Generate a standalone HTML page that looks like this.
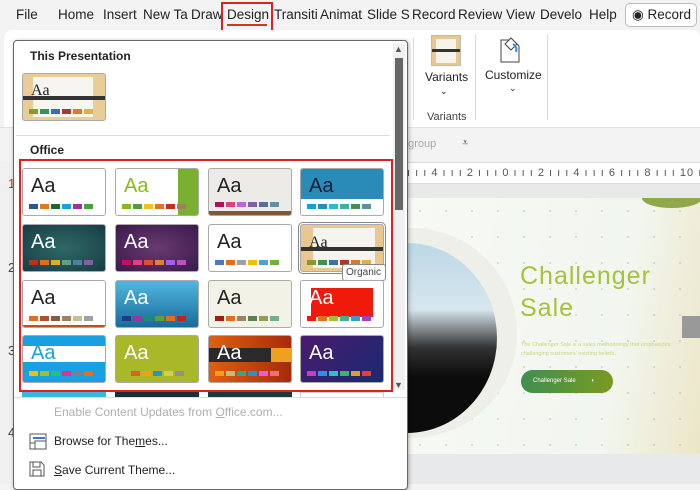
<!DOCTYPE html>
<html><head><meta charset="utf-8"><style>
*{margin:0;padding:0;box-sizing:border-box}
body{width:700px;height:484px;overflow:hidden;background:#f3f3f3;font-family:"Liberation Sans",sans-serif;position:relative;color:#222}
.a{position:absolute}
.tab{position:absolute;top:7px;font-size:13.5px;color:#222}
.th{position:absolute;width:84px;height:48px;border:1px solid #aaa;border-radius:3px;overflow:hidden;background:#fff}
.th .t{position:absolute;left:8px;top:6px;font-size:20px}
.sw{position:absolute;left:6px;bottom:6px;display:flex;gap:2px}
.sw i{display:block;width:9px;height:5px}
</style></head><body>
<div class="tab" style="left:16px">File</div>
<div class="tab" style="left:58px">Home</div>
<div class="tab" style="left:103px">Insert</div>
<div class="tab" style="left:143px">New Ta</div>
<div class="tab" style="left:191px">Draw</div>
<div class="tab" style="left:227px">Design</div>
<div class="a" style="left:227px;top:24px;width:40px;height:2px;background:#c43e1c"></div>
<div class="a" style="left:221px;top:2px;width:52px;height:32px;border:2px solid #e02020"></div>
<div class="tab" style="left:274px">Transiti</div>
<div class="tab" style="left:320px">Animat</div>
<div class="tab" style="left:367px">Slide S</div>
<div class="tab" style="left:412px">Record</div>
<div class="tab" style="left:458px">Review</div>
<div class="tab" style="left:506px">View</div>
<div class="tab" style="left:540px">Develo</div>
<div class="tab" style="left:589px">Help</div>
<div class="a" style="left:625px;top:3px;width:72px;height:24px;border:1px solid #bbb;border-radius:5px;background:#fff;font-size:13.5px;padding:3px 0 0 6px">◉ Record</div>
<div class="a" style="left:4px;top:30px;width:696px;height:97px;background:#fff;border-radius:8px 8px 0 0"></div>
<div class="a" style="left:413px;top:38px;width:1px;height:82px;background:#ddd"></div>
<div class="a" style="left:475px;top:34px;width:1px;height:86px;background:#ddd"></div>
<div class="a" style="left:547px;top:34px;width:1px;height:86px;background:#ddd"></div>
<div class="a" style="left:431px;top:35px;width:30px;height:31px;background:#e8c890;border:1px solid #bbb"><div style="position:absolute;left:4px;top:3px;width:20px;height:24px;background:#f6f3ea"></div><div style="position:absolute;left:0;top:13px;width:28px;height:3px;background:#333"></div></div>
<div class="a" style="left:425px;top:70px;font-size:12px">Variants</div>
<div class="a" style="left:440px;top:86px;font-size:9px">⌄</div>
<div class="a" style="left:427px;top:111px;font-size:11px;color:#444">Variants</div>
<svg class="a" style="left:497px;top:34px" width="26" height="30"><path d="M4 6h12l6 6v16H4z" fill="#fff" stroke="#444"/><path d="M8 10l6-6 6 6-6 6z" fill="#fff" stroke="#444"/><path d="M16 10c3 2 4 5 3 8" stroke="#3a8fd8" stroke-width="2" fill="none"/></svg>
<div class="a" style="left:485px;top:68px;font-size:12px">Customize</div>
<div class="a" style="left:509px;top:83px;font-size:9px">⌄</div>
<div class="a" style="left:0;top:127px;width:700px;height:35px;background:#f3f3f3;border-top:1px solid #e2e2e2"></div>
<div class="a" style="left:402px;top:138px;font-size:11px;color:#aaa">ngroup</div>
<div class="a" style="left:462px;top:137px;font-size:11px;color:#555">⩡</div>
<div class="a" style="left:0;top:162px;width:16px;height:322px;background:#f0f0f0;border-right:1px solid #ccc"></div>
<div class="a" style="left:8px;top:176px;font-size:13px;color:#d03010">1</div>
<div class="a" style="left:8px;top:260px;font-size:13px;color:#444">2</div>
<div class="a" style="left:8px;top:343px;font-size:13px;color:#444">3</div>
<div class="a" style="left:8px;top:425px;font-size:13px;color:#444">4</div>
<div class="a" style="left:407px;top:162px;width:293px;height:22px;background:#fff;border-top:1px solid #ddd;border-bottom:1px solid #ddd;font-size:11px;color:#555;padding-top:4px;white-space:nowrap;letter-spacing:1px;overflow:hidden">ı ı ı 4 ı ı ı 2 ı ı ı 0 ı ı ı 2 ı ı ı 4 ı ı ı 6 ı ı ı 8 ı ı ı 10 ı ı ı 12 ı ı ı 14 ı ı ı 16</div>
<div class="a" style="left:407px;top:184px;width:293px;height:300px;background:#e8e9eb"></div>
<div class="a" style="left:407px;top:198px;width:293px;height:256px;overflow:hidden;background-image:radial-gradient(#888 0.6px,transparent 0.7px),linear-gradient(100deg,#f7f9f5,#f2f6ef 70%,#ece6c8);background-size:26px 26px,100% 100%">
<div class="a" style="left:-100px;top:30px;width:210px;height:210px;border-radius:50%;background:#edefe8"></div>
<div class="a" style="left:-90px;top:45px;width:180px;height:190px;border-radius:50%;background:linear-gradient(180deg,#bcd8e6 0,#d7e6ee 35%,#333 55%,#0c0c0c 70%)"></div>
<div class="a" style="left:113px;top:64px;font-size:25px;color:#a8c13a;letter-spacing:1px">Challenger</div>
<div class="a" style="left:113px;top:96px;font-size:25px;color:#a8c13a;letter-spacing:1px">Sale</div>
<div class="a" style="left:114px;top:143px;font-size:5.5px;color:#c5d87a;line-height:9px">The Challenger Sale is a sales methodology that emphasizes<br>challenging customers' existing beliefs.</div>
<div class="a" style="left:114px;top:172px;width:92px;height:23px;border-radius:12px;background:linear-gradient(90deg,#3f8f50,#7a9a20);color:#fff;font-size:6px;padding:8px 0 0 12px">Challenger Sale &nbsp;&nbsp;&nbsp;&nbsp;&nbsp;&nbsp;&nbsp;&nbsp;◖</div>
<div class="a" style="left:275px;top:118px;width:18px;height:22px;background:#999"></div>
<div class="a" style="left:235px;top:-10px;width:60px;height:20px;border-radius:50%;background:#8fa84a"></div>
</div>
<div class="a" style="left:13px;top:40px;width:395px;height:450px;background:#fff;border:1px solid #666;border-radius:4px;box-shadow:1px 1px 4px rgba(0,0,0,.3)"></div>
<div class="a" style="left:393px;top:44px;width:12px;height:346px;background:#f0f0f0"></div>
<div class="a" style="left:394px;top:44px;font-size:9px;color:#555">▲</div>
<div class="a" style="left:395px;top:58px;width:8px;height:152px;background:#666"></div>
<div class="a" style="left:394px;top:380px;font-size:9px;color:#555">▼</div>
<div class="a" style="left:30px;top:49px;font-size:12px;font-weight:bold">This Presentation</div>
<div class="th" style="left:22px;top:73px;background:#e9cc96"><div style="position:absolute;left:10px;top:3px;width:60px;height:40px;background:#f6f5ef"></div><div style="position:absolute;left:0;top:22px;width:84px;height:4px;background:#333"></div><div class="t" style="font-family:'Liberation Serif';top:8px;font-size:16px">Aa</div><div class="sw"><i style="background:#8a9a2a"></i><i style="background:#3f8f5a"></i><i style="background:#3f6fa8"></i><i style="background:#a83a2a"></i><i style="background:#e07a20"></i><i style="background:#e0b040"></i></div></div>
<div class="a" style="left:16px;top:135px;width:374px;height:1px;background:#ddd"></div>
<div class="a" style="left:30px;top:143px;font-size:12px;font-weight:bold">Office</div>
<div class="a" style="left:19px;top:159px;width:374px;height:233px;border:2px solid #e02020"></div>
<div class="th" style="left:22px;top:168px"><div class="t">Aa</div><div class="sw"><i style="background:#2a5a8a"></i><i style="background:#e07a20"></i><i style="background:#1a6a2a"></i><i style="background:#1aa0e0"></i><i style="background:#a030a0"></i><i style="background:#4aa040"></i></div></div>
<div class="th" style="left:115px;top:168px"><div style="position:absolute;right:0;top:0;width:20px;height:48px;background:#7ab030"></div><div class="t" style="color:#8ab820">Aa</div><div class="sw"><i style="background:#8ab820"></i><i style="background:#4aa040"></i><i style="background:#f0c020"></i><i style="background:#f07020"></i><i style="background:#c03020"></i><i style="background:#a08060"></i></div></div>
<div class="th" style="left:208px;top:168px;background:#ecebe8"><div class="t">Aa</div><div style="position:absolute;left:0;bottom:0;width:84px;height:4px;background:#7a5a3a"></div><div class="sw" style="bottom:8px"><i style="background:#b01060"></i><i style="background:#e04080"></i><i style="background:#c060e0"></i><i style="background:#8060a0"></i><i style="background:#5070a0"></i><i style="background:#6090a0"></i></div></div>
<div class="th" style="left:300px;top:168px"><div style="position:absolute;left:0;top:0;width:84px;height:30px;background:#2a8ab8"></div><div class="t" style="color:#123">Aa</div><div class="sw"><i style="background:#10a0e0"></i><i style="background:#2090c0"></i><i style="background:#20c0d0"></i><i style="background:#40b0a0"></i><i style="background:#409050"></i><i style="background:#6090a0"></i></div></div>
<div class="th" style="left:22px;top:224px;background:radial-gradient(#2f6a66,#173c45)"><div class="t" style="color:#fff">Aa</div><div class="sw"><i style="background:#c03010"></i><i style="background:#e07010"></i><i style="background:#e0b020"></i><i style="background:#60a080"></i><i style="background:#5080a0"></i><i style="background:#8060a0"></i></div></div>
<div class="th" style="left:115px;top:224px;background:radial-gradient(#6a3a70,#3a1a4a)"><div class="t" style="color:#fff">Aa</div><div class="sw"><i style="background:#c01060"></i><i style="background:#e04080"></i><i style="background:#e05030"></i><i style="background:#e08030"></i><i style="background:#a060e0"></i><i style="background:#c050c0"></i></div></div>
<div class="th" style="left:208px;top:224px"><div class="t">Aa</div><div class="sw"><i style="background:#4a7ac0"></i><i style="background:#e07020"></i><i style="background:#a0a0a0"></i><i style="background:#f0c000"></i><i style="background:#50a0d0"></i><i style="background:#70b040"></i></div></div>
<div class="th" style="left:300px;top:224px;background:#e8c890;outline:1px solid #888;outline-offset:1px"><div style="position:absolute;left:12px;top:3px;width:62px;height:40px;background:#f5f4ee"></div><div style="position:absolute;left:0;top:22px;width:84px;height:4px;background:#333"></div><div class="t" style="font-family:'Liberation Serif';font-size:16px;top:9px">Aa</div><div class="sw"><i style="background:#8a9a2a"></i><i style="background:#3f8f5a"></i><i style="background:#3f6fa8"></i><i style="background:#a83a2a"></i><i style="background:#e07a20"></i><i style="background:#e0b040"></i></div></div>
<div class="a" style="left:342px;top:264px;width:44px;height:17px;border:1px solid #888;border-radius:3px;background:#fff;font-size:10px;color:#444;padding:2px 3px">Organic</div>
<div class="th" style="left:22px;top:280px"><div class="t">Aa</div><div style="position:absolute;left:0;bottom:0;width:84px;height:2px;background:#c05020"></div><div class="sw"><i style="background:#e07020"></i><i style="background:#b05030"></i><i style="background:#806040"></i><i style="background:#a08060"></i><i style="background:#c0c090"></i><i style="background:#a0a0a0"></i></div></div>
<div class="th" style="left:115px;top:280px;background:linear-gradient(180deg,#50b8e0,#1a6a9a)"><div class="t" style="color:#fff">Aa</div><div class="sw"><i style="background:#1a3a8a"></i><i style="background:#a030a0"></i><i style="background:#1a8a80"></i><i style="background:#60a030"></i><i style="background:#e07020"></i><i style="background:#c02020"></i></div></div>
<div class="th" style="left:208px;top:280px;background:#f3f2e6"><div class="t">Aa</div><div class="sw"><i style="background:#a02010"></i><i style="background:#e07020"></i><i style="background:#a08060"></i><i style="background:#608050"></i><i style="background:#90a050"></i><i style="background:#70b090"></i></div></div>
<div class="th" style="left:300px;top:280px"><div style="position:absolute;left:10px;top:7px;width:62px;height:29px;background:#f01a0a"></div><div class="t" style="color:#fff">Aa</div><div class="sw"><i style="background:#f01a0a"></i><i style="background:#e07020"></i><i style="background:#a0c030"></i><i style="background:#40b090"></i><i style="background:#30a0d0"></i><i style="background:#a040c0"></i></div></div>
<div class="th" style="left:22px;top:335px;background:#18a0e0"><div style="position:absolute;left:0;top:10px;width:84px;height:16px;background:#fff"></div><div class="t" style="color:#18a0e0">Aa</div><div class="sw"><i style="background:#f0c000"></i><i style="background:#a0c030"></i><i style="background:#20c080"></i><i style="background:#e03090"></i><i style="background:#808080"></i><i style="background:#e07020"></i></div></div>
<div class="th" style="left:115px;top:335px;background:#a8b828"><div class="t" style="color:#fff">Aa</div><div class="sw" style="left:15px"><i style="background:#e06020"></i><i style="background:#f0a020"></i><i style="background:#3090c0"></i><i style="background:#d0d050"></i><i style="background:#909090"></i></div></div>
<div class="th" style="left:208px;top:335px;background:linear-gradient(90deg,#e06010,#a82a08)"><div style="position:absolute;left:0;top:12px;width:62px;height:14px;background:#2a2a2a"></div><div style="position:absolute;left:62px;top:12px;width:22px;height:14px;background:#f0a020"></div><div class="t" style="color:#fff">Aa</div><div class="sw"><i style="background:#f0a020"></i><i style="background:#c0c070"></i><i style="background:#40a080"></i><i style="background:#3090c0"></i><i style="background:#e060e0"></i><i style="background:#f07070"></i></div></div>
<div class="th" style="left:300px;top:335px;background:linear-gradient(135deg,#4a1a70,#1a2a70)"><div class="t" style="color:#fff">Aa</div><div class="sw"><i style="background:#c040c0"></i><i style="background:#3090e0"></i><i style="background:#30c0c0"></i><i style="background:#40b070"></i><i style="background:#e0a020"></i><i style="background:#e04040"></i></div></div>
<div class="a" style="left:22px;top:392px;width:84px;height:5px;background:#38b8e0"></div>
<div class="a" style="left:115px;top:392px;width:84px;height:5px;background:#1a3038"></div>
<div class="a" style="left:208px;top:392px;width:84px;height:5px;background:#1a3a40"></div>
<div class="a" style="left:300px;top:392px;width:84px;height:5px;border:1px solid #ccc;border-bottom:none;background:#fff"></div>
<div class="a" style="left:14px;top:397px;width:393px;height:1px;background:#ddd"></div>
<div class="a" style="left:54px;top:405px;font-size:12px;color:#b0b0b0">Enable Content Updates from <u>O</u>ffice.com...</div>
<svg class="a" style="left:29px;top:433px" width="18" height="17"><rect x="1" y="1" width="16" height="9" fill="#fff" stroke="#555"/><rect x="4" y="4" width="12" height="2" fill="#3a7ac8"/><rect x="6" y="8" width="11" height="8" fill="#fff" stroke="#555"/><path d="M1 10v6h5" fill="none" stroke="#555"/></svg>
<div class="a" style="left:54px;top:434px;font-size:12px">Browse for The<u>m</u>es...</div>
<svg class="a" style="left:29px;top:461px" width="16" height="16"><path d="M1 1h11l3 3v11H1z" fill="#fff" stroke="#555"/><rect x="4" y="1" width="7" height="5" fill="none" stroke="#555"/><rect x="4" y="9" width="8" height="6" fill="none" stroke="#555"/></svg>
<div class="a" style="left:54px;top:463px;font-size:12px"><u>S</u>ave Current Theme...</div>
</body></html>
